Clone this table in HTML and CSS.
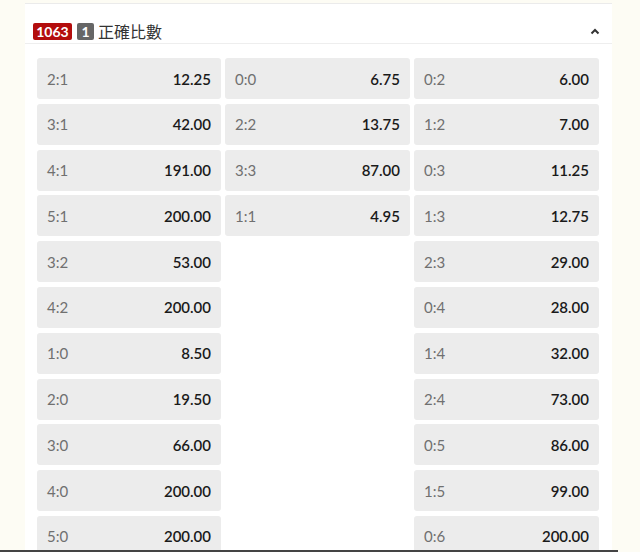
FILE: index.html
```html
<!DOCTYPE html>
<html>
<head>
<meta charset="utf-8">
<link rel="stylesheet" href="styles.css">
</head>
<body>
<div class="panel">
  <div class="header">
    <span class="badge badge-red">1063</span>
    <span class="badge badge-gray">1</span>
    <span class="title">正確比數</span>
    <svg class="chev" width="10" height="7" viewBox="0 0 10 7"><path d="M1.5 5.5 L5 2 L8.5 5.5" fill="none" stroke="#333" stroke-width="2"/></svg>
  </div>
  <div class="grid">
    <div class="col">
      <div class="cell"><span class="lab">2:1</span><span class="val">12.25</span></div>
      <div class="cell"><span class="lab">3:1</span><span class="val">42.00</span></div>
      <div class="cell"><span class="lab">4:1</span><span class="val">191.00</span></div>
      <div class="cell"><span class="lab">5:1</span><span class="val">200.00</span></div>
      <div class="cell"><span class="lab">3:2</span><span class="val">53.00</span></div>
      <div class="cell"><span class="lab">4:2</span><span class="val">200.00</span></div>
      <div class="cell"><span class="lab">1:0</span><span class="val">8.50</span></div>
      <div class="cell"><span class="lab">2:0</span><span class="val">19.50</span></div>
      <div class="cell"><span class="lab">3:0</span><span class="val">66.00</span></div>
      <div class="cell"><span class="lab">4:0</span><span class="val">200.00</span></div>
      <div class="cell"><span class="lab">5:0</span><span class="val">200.00</span></div>
    </div>
    <div class="col">
      <div class="cell"><span class="lab">0:0</span><span class="val">6.75</span></div>
      <div class="cell"><span class="lab">2:2</span><span class="val">13.75</span></div>
      <div class="cell"><span class="lab">3:3</span><span class="val">87.00</span></div>
      <div class="cell"><span class="lab">1:1</span><span class="val">4.95</span></div>
    </div>
    <div class="col">
      <div class="cell"><span class="lab">0:2</span><span class="val">6.00</span></div>
      <div class="cell"><span class="lab">1:2</span><span class="val">7.00</span></div>
      <div class="cell"><span class="lab">0:3</span><span class="val">11.25</span></div>
      <div class="cell"><span class="lab">1:3</span><span class="val">12.75</span></div>
      <div class="cell"><span class="lab">2:3</span><span class="val">29.00</span></div>
      <div class="cell"><span class="lab">0:4</span><span class="val">28.00</span></div>
      <div class="cell"><span class="lab">1:4</span><span class="val">32.00</span></div>
      <div class="cell"><span class="lab">2:4</span><span class="val">73.00</span></div>
      <div class="cell"><span class="lab">0:5</span><span class="val">86.00</span></div>
      <div class="cell"><span class="lab">1:5</span><span class="val">99.00</span></div>
      <div class="cell"><span class="lab">0:6</span><span class="val">200.00</span></div>
    </div>
  </div>
</div>
<div class="bottombar"></div>
</body>
</html>
```
FILE: styles.css
```css
html, body {
  margin: 0;
  padding: 0;
  background: #fdfcf4;
  font-family: Lato, "Noto Sans CJK TC", sans-serif;
  overflow: hidden;
}
.panel {
  margin-left: 25px;
  width: 587px;
  margin-top: 3px;
  background: #fff;
  border-top: 1px solid #ebebeb;
  min-height: 560px;
}
.header {
  display: flex;
  align-items: center;
  height: 22px;
  padding: 16px 8px 1px 8px;
  border-bottom: 1px solid #eeeeee;
}
.badge {
  display: inline-flex;
  align-items: center;
  justify-content: center;
  height: 17px;
  font-size: 14px;
  font-weight: 700;
  color: #fff;
  border-radius: 2px;
}
.badge-red {
  background: #b30d0d;
  width: 39px;
}
.badge-gray {
  background: #666;
  width: 17px;
  margin-left: 5px;
}
.title {
  margin-left: 4px;
  font-size: 16px;
  color: #333;
  font-family: "Noto Sans CJK TC", sans-serif;
}
.chev {
  margin-left: auto;
  margin-right: 4px;
}
.grid {
  display: grid;
  grid-template-columns: 184px 185px 185px;
  column-gap: 4px;
  padding: 14px 12px 0 12px;
  align-items: start;
}
.col {
  display: flex;
  flex-direction: column;
  gap: 4.8px;
}
.cell {
  height: 41px;
  background: #ececec;
  border-radius: 3px;
  display: flex;
  align-items: center;
  justify-content: space-between;
  padding: 0 10px;
  font-size: 15px;
}
.lab {
  color: #707070;
}
.val {
  color: #1a1a1a;
  font-weight: 600;
}
.bottombar {
  position: fixed;
  left: 0;
  bottom: 0;
  width: 618px;
  height: 2px;
  background: #444;
}
```
